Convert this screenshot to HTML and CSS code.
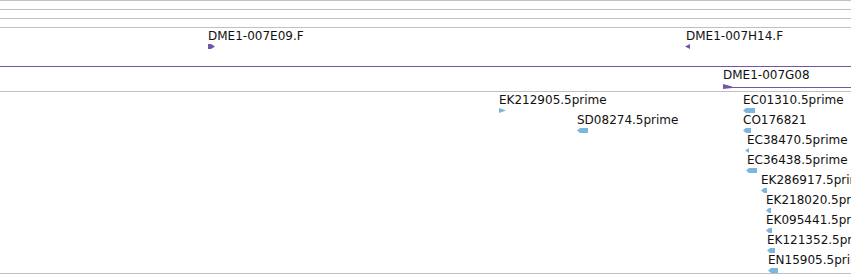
FILE: index.html
```html
<!DOCTYPE html>
<html lang="en">
<head>
    <meta charset="UTF-8">
    <title>Tracks</title>
    <link rel="stylesheet" href="styles.css">
</head>
<body>
    <div class="panel">
        <div class="track thin"></div>
        <div class="track thin"></div>
        <div class="track thin"></div>

        <div class="track clones">
            <div class="feature" style="left:208px; top:2px">
                <div class="label">DME1-007E09.F</div>
                <svg class="glyph purple" width="7" height="5"><path d="M0 0H3L7 2.5L3 5H0Z"/></svg>
            </div>
            <div class="feature" style="left:686px; top:2px">
                <div class="label">DME1-007H14.F</div>
                <svg class="glyph purple" width="5" height="5" style="margin-left:-1px"><path d="M5 0V5L0 2.5Z"/></svg>
            </div>
        </div>

        <div class="track long">
            <div class="feature" style="left:723px; top:2px">
                <div class="label">DME1-007G08</div>
                <svg class="glyph purple tall" width="128" height="5"><path d="M0 0L9 2.5V3H128V4H9L0 5Z"/></svg>
            </div>
        </div>

        <div class="track ests">
            <div class="feature" style="left:499px; top:2px">
                <div class="label">EK212905.5prime</div>
                <svg class="glyph blue" width="7" height="5"><path d="M0 0L7 2.5L0 5Z"/></svg>
            </div>
            <div class="feature" style="left:577px; top:22px">
                <div class="label">SD08274.5prime</div>
                <svg class="glyph blue" width="11" height="5"><path d="M11 0V5H3L0 2.5L3 0Z"/></svg>
            </div>
            <div class="feature" style="left:743px; top:2px">
                <div class="label">EC01310.5prime</div>
                <svg class="glyph blue" width="12" height="5"><path d="M12 0V5H3L0 2.5L3 0Z"/></svg>
            </div>
            <div class="feature" style="left:743px; top:22px">
                <div class="label">CO176821</div>
                <svg class="glyph blue" width="8" height="5"><path d="M8 0V5H3L0 2.5L3 0Z"/></svg>
            </div>
            <div class="feature" style="left:747px; top:42px">
                <div class="label">EC38470.5prime</div>
                <svg class="glyph blue" width="4" height="5" style="margin-left:-2px"><path d="M4 0V5L0 2.5Z"/></svg>
            </div>
            <div class="feature" style="left:747px; top:62px">
                <div class="label">EC36438.5prime</div>
                <svg class="glyph blue" width="11" height="5" style="margin-left:-1px"><path d="M11 0V5H3L0 2.5L3 0Z"/></svg>
            </div>
            <div class="feature" style="left:761px; top:82px">
                <div class="label">EK286917.5prime</div>
                <svg class="glyph blue" width="6" height="5"><path d="M6 0V5H3L0 2.5L3 0Z"/></svg>
            </div>
            <div class="feature" style="left:766px; top:102px">
                <div class="label">EK218020.5prime</div>
                <svg class="glyph blue" width="5" height="5"><path d="M5 0V5H3L0 2.5L3 0Z"/></svg>
            </div>
            <div class="feature" style="left:766px; top:122px">
                <div class="label">EK095441.5prime</div>
                <svg class="glyph blue" width="6" height="5"><path d="M6 0V5H3L0 2.5L3 0Z"/></svg>
            </div>
            <div class="feature" style="left:767px; top:142px">
                <div class="label">EK121352.5prime</div>
                <svg class="glyph blue" width="8" height="5"><path d="M8 0V5H3L0 2.5L3 0Z"/></svg>
            </div>
            <div class="feature" style="left:768px; top:162px">
                <div class="label">EN15905.5prime</div>
                <svg class="glyph blue" width="10" height="5"><path d="M10 0V5H3L0 2.5L3 0Z"/></svg>
            </div>
        </div>
    </div>
</body>
</html>
```

FILE: styles.css
```css
* {
    margin: 0px;
    padding: 0px;
    box-sizing: border-box;
}
body{
    font-family: "DejaVu Sans", sans-serif;
    background: #fff;
}
.panel{
    width: 851px;
    overflow: hidden;
}
.track{
    position: relative;
    width: 100%;
    border-top: 1px solid #c0c0c0;
}
.track.thin{
    height: 9px;
}
.track.clones{
    height: 39px;
}
.track.long{
    height: 25px;
    border-top-color: #7055aa;
}
.track.ests{
    height: 183px;
    border-bottom: 1px solid #c0c0c0;
}
.feature{
    position: absolute;
    white-space: nowrap;
}
.feature .label{
    font-size: 12px;
    line-height: 12px;
    color: #111;
}
.feature .glyph{
    display: block;
    margin-top: 2px;
}
.feature .glyph.tall{
    margin-top: 3px;
}
.glyph.purple path{
    fill: #7055aa;
}
.glyph.blue path{
    fill: #7ab6de;
}
```
